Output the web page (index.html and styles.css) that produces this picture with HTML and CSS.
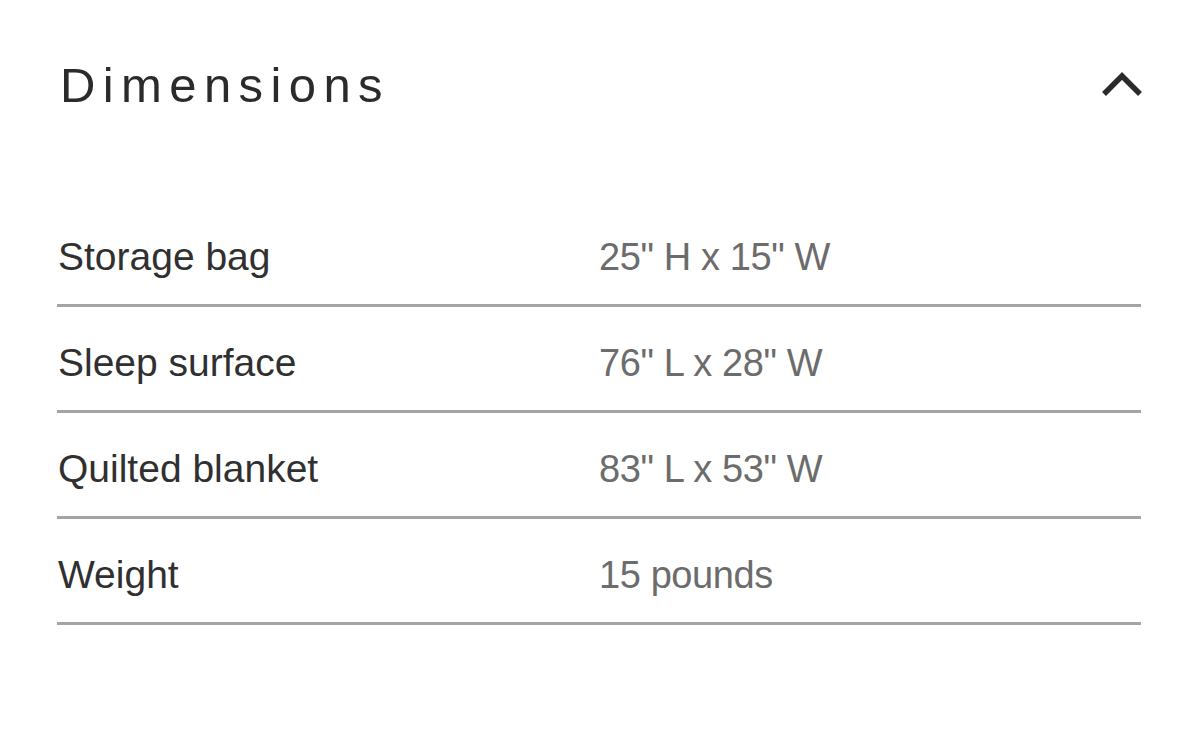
FILE: index.html
```html
<!DOCTYPE html>
<html lang="en">
<head>
<meta charset="utf-8">
<title>Dimensions</title>
<link rel="stylesheet" href="styles.css">
</head>
<body>
<section class="panel">
  <header class="panel-head">
    <h2 class="title">Dimensions</h2>
    <svg class="chevron" width="42" height="28" viewBox="0 0 42 28" aria-hidden="true">
      <polyline points="3,23 21,5 39,23" fill="none" stroke="#2b2b2b" stroke-width="5.5" stroke-linecap="butt" stroke-linejoin="miter"/>
    </svg>
  </header>
  <div class="specs">
    <div class="row"><span class="label">Storage bag</span><span class="value">25" H x 15" W</span></div>
    <div class="row"><span class="label">Sleep surface</span><span class="value">76" L x 28" W</span></div>
    <div class="row"><span class="label">Quilted blanket</span><span class="value">83" L x 53" W</span></div>
    <div class="row"><span class="label">Weight</span><span class="value">15 pounds</span></div>
  </div>
</section>
</body>
</html>
```

FILE: styles.css
```css
html, body {
  margin: 0;
  padding: 0;
  background: #ffffff;
}

body {
  font-family: "Liberation Sans", Arial, sans-serif;
}

.panel {
  padding: 61px 59px 0 57px;
}

.panel-head {
  display: flex;
  justify-content: space-between;
  align-items: center;
  height: 48px;
}

.title {
  margin: 0 0 0 3px;
  font-size: 49px;
  line-height: 48px;
  font-weight: 400;
  letter-spacing: 7.4px;
  color: #2b2b2b;
}

.chevron {
  display: block;
  margin-right: -2px;
}

.specs {
  margin-top: 92px;
}

.row {
  display: grid;
  grid-template-columns: 542px 1fr;
  height: 103px;
  border-bottom: 3px solid #a4a4a4;
  align-items: end;
}

.label,
.value {
  font-size: 39px;
  line-height: 40px;
  padding-bottom: 27px;
}

.label {
  color: #303030;
  padding-left: 1px;
}

.value {
  color: #6c6c6c;
  font-size: 38px;
  letter-spacing: -0.4px;
}
```
